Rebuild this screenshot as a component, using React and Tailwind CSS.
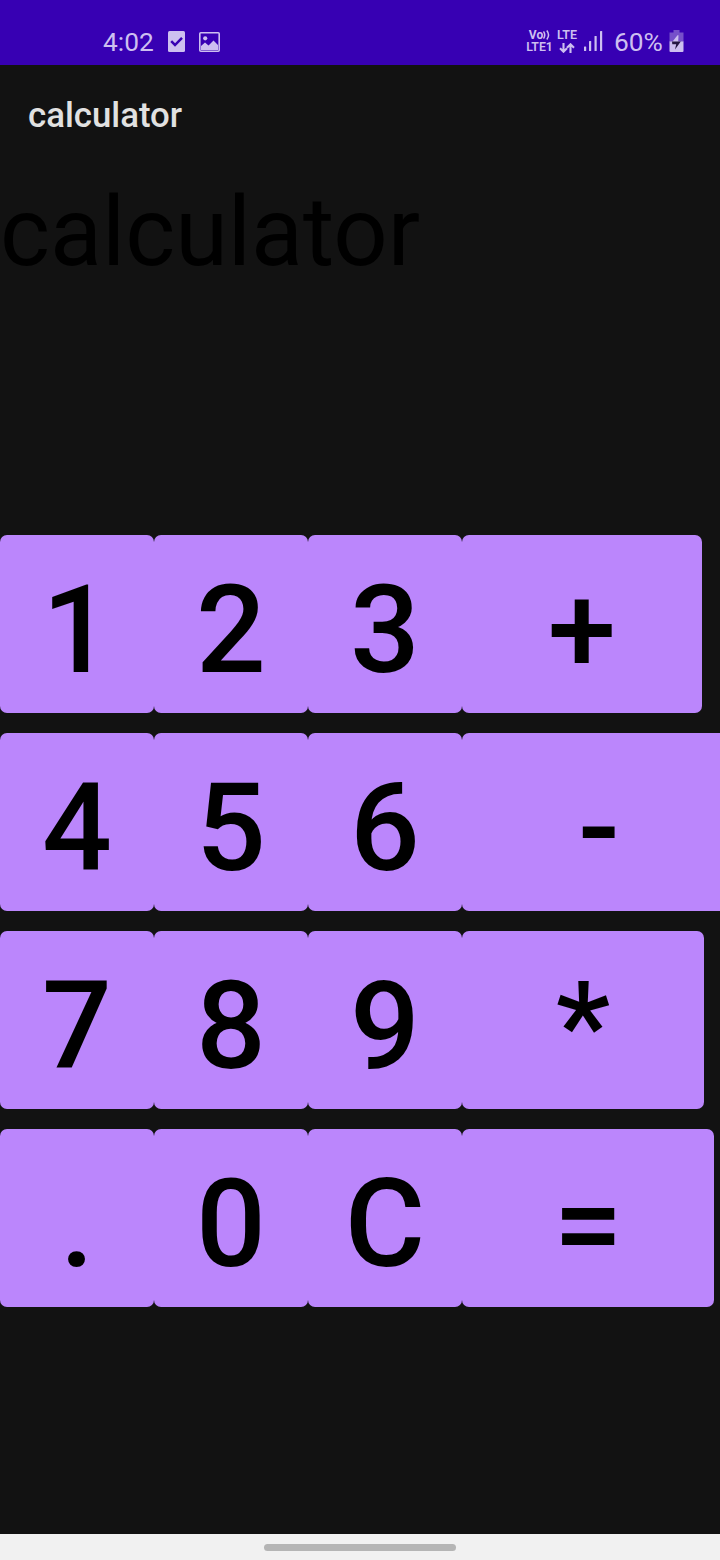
const rows = [
  { digits: ["1", "2", "3"], op: "+", width: "w-[240px]" },
  { digits: ["4", "5", "6"], op: "-", width: "w-[274px]" },
  { digits: ["7", "8", "9"], op: "*", width: "w-[242px]" },
  { digits: [".", "0", "C"], op: "=", width: "w-[252px]" },
];

function Key({ label, width }) {
  return (
    <button
      className={`${width} flex h-[178px] shrink-0 items-center justify-center rounded-[7px] bg-[#bb86fc] pt-[12px] text-[123px] leading-none font-medium text-black`}
    >
      {label}
    </button>
  );
}

function StatusBar() {
  return (
    <header className="flex h-[65px] shrink-0 items-start bg-[#3700b3] pl-[103px] text-[#cdbff0]">
      <span className="mt-[27px] w-[65px] text-[26.300px] leading-[30px]">4:02</span>
      <svg className="mt-[31px] h-[21px] w-[17px]" viewBox="0 0 17 21">
        <rect width="17" height="21" rx="1.5" fill="currentColor" />
        <path d="M3.2 10.2 7 14l7-7.200" fill="none" stroke="#3700b3" strokeWidth="2.5" />
      </svg>
      <svg className="mt-[32px] ml-[14px] h-[20px] w-[21px]" viewBox="0 0 21 20">
        <rect x=".8" y=".8" width="19.4" height="18.4" rx="1" fill="none" stroke="currentColor" strokeWidth="1.6" />
        <circle cx="6.2" cy="6.3" r="2.1" fill="currentColor" />
        <path d="M2 15.500V14L6 10.500 9.500 13.500 14.500 8.500 19 13V16H2Z" fill="currentColor" />
        <path d="M2 14.500h17V18H2Z" fill="currentColor" />
      </svg>
      <div className="mt-[29px] ml-[306px] flex w-[27px] flex-col items-center text-[12px] leading-[12px] font-bold">
        <span className="flex items-center">
          Vo
          <svg className="h-[10px] w-[7px]" viewBox="0 0 7 10" fill="none" stroke="currentColor" strokeWidth="1.5">
            <path d="M.5 1.500Q3 5 .5 8.500M3.800 .5Q7.300 5 3.800 9.500" />
          </svg>
        </span>
        <span className="text-[12.300px] font-semibold">LTE1</span>
      </div>
      <div className="mt-[29px] ml-[3px] flex w-[22px] flex-col items-center text-[12px] leading-[12px] font-semibold">
        <span className="text-[12.500px]">LTE</span>
        <svg className="mt-[2px] h-[10px] w-[16px]" viewBox="0 0 16 10" fill="none" stroke="currentColor" strokeWidth="2.1">
          <path d="M4.500 0v8.500M1 5.200l3.500 3.500L8 5.200M11.500 10V1.500M8 4.800l3.500-3.500L15 4.800" />
        </svg>
      </div>
      <svg className="mt-[31px] ml-[6px] h-[20px] w-[19px]" viewBox="0 0 19 20" fill="currentColor">
        <rect x="0" y="15.500" width="2.200" height="4.500" rx=".5" />
        <rect x="5" y="10" width="2.200" height="10" rx=".5" />
        <rect x="10.500" y="5" width="2.200" height="15" rx=".5" />
        <rect x="16" y="0" width="2.200" height="20" rx=".5" />
      </svg>
      <span className="mt-[27px] ml-[11px] w-[55px] text-[26.300px] leading-[30px]">60%</span>
      <svg className="mt-[30px] h-[22px] w-[15px]" viewBox="0 0 15 22">
        <path d="M4.500 0h6v2.500H14.500V12H.5V2.500h4Z" fill="#7650ca" />
        <path d="M.5 11.500h14V21q0 1-1 1h-12q-1 0-1-1Z" fill="currentColor" />
        <path d="M8.500 5.300 3.200 12h6L9.500 5.300Z" fill="currentColor" />
        <path d="M3 11.500h8.800L6 19.500 7.200 14.300H3.300Z" fill="#251842" />
      </svg>
    </header>
  );
}

export default function App() {
  return (
    <div className="flex h-[1560px] w-[720px] flex-col overflow-hidden bg-[#121212] font-['Roboto',sans-serif]">
      <StatusBar />
      <h1 className="flex h-[112px] shrink-0 items-start pt-[30px] pl-[28px] text-[34.800px] leading-[41px] font-medium text-[#e1e1e1]">
        calculator
      </h1>
      <div className="h-[358px] shrink-0 text-[95.500px] leading-[110px] text-black">calculator</div>
      <main className="flex shrink-0 flex-col gap-[20px]">
        {rows.map((row) => (
          <div key={row.op} className="flex">
            {row.digits.map((digit) => (
              <Key key={digit} label={digit} width="w-[154px]" />
            ))}
            <Key label={row.op} width={row.width} />
          </div>
        ))}
      </main>
      <footer className="mt-auto flex h-[26px] shrink-0 justify-center bg-[#f1f1f1] pt-[10px]">
        <div className="h-[7px] w-[192px] rounded-full bg-[#b5b5b5]" />
      </footer>
    </div>
  );
}
